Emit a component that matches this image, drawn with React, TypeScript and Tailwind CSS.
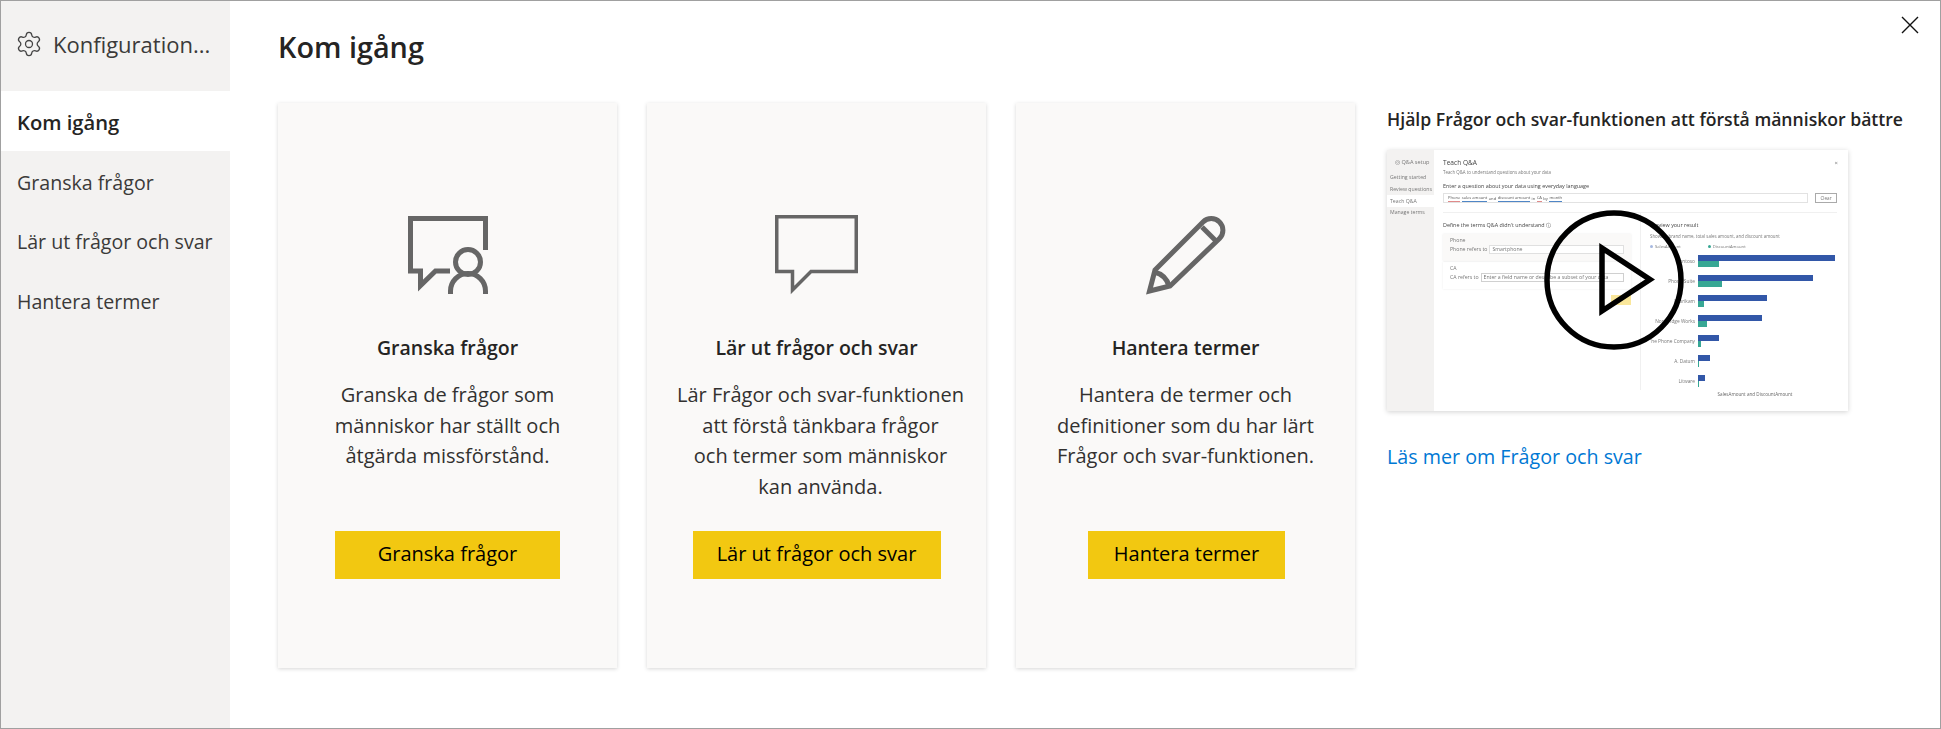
import React from "react";
import { Settings } from "lucide-react";

const font = "[font-family:'Open_Sans','Noto_Sans',sans-serif]";

const ReviewIcon = () => (
  <svg width="80" height="78" viewBox="0 0 80 78" fill="none" stroke="#666" strokeWidth="5">
    <path d="M42 55H27.5L12.5 69.5V55H2.5V2.5H77.5V34" />
    <circle cx="60" cy="46" r="12.5" />
    <path d="M42.5 78v-3a17.5 17.5 0 0 1 35 0v3" />
  </svg>
);

const TeachIcon = () => (
  <svg width="83" height="80" viewBox="0 0 83 80" fill="none" stroke="#666" strokeWidth="3.5">
    <path d="M1.75 1.75H81.25V56.5H36L17.5 75V56.5H1.75Z" />
  </svg>
);

const PencilIcon = () => (
  <svg width="80" height="80" viewBox="0 0 80 80" fill="none" stroke="#666" strokeWidth="5">
    <path d="M9 55L57 7a11.5 11.5 0 0 1 16.5 16.5L24 71L3.5 76Z" />
    <path d="M56 12L70 26" />
    <path d="M8.5 57Q20 60 23 71" />
  </svg>
);

type CardProps = {
  icon: React.ReactNode;
  title: string;
  lines: string[];
  button: string;
  buttonWidth: string;
  bodyOffset?: string;
};

const Card = ({ icon, title, lines, button, buttonWidth, bodyOffset = "" }: CardProps) => (
  <div className="flex h-[565px] w-[339px] flex-col items-center bg-[#faf9f8] pt-[112px] shadow-[0_1px_4px_rgba(0,0,0,0.16)]">
    <div className="flex h-[80px] items-center justify-center">{icon}</div>
    <h2 className="mt-[40px] text-[19.5px] leading-[26px] font-semibold text-[#252423]">{title}</h2>
    <div className={`mt-[19px] h-[151px] text-center text-[20px] leading-[30.5px] text-[#323130] ${bodyOffset}`}>
      {lines.map((line) => (
        <p key={line}>{line}</p>
      ))}
    </div>
    <button className={`h-[48px] bg-[#f2c811] pb-[3px] text-[20px] font-medium text-black ${buttonWidth}`}>{button}</button>
  </div>
);

const bars = [
  ["Contoso", 137, 21],
  ["Phone Suite", 115, 24],
  ["Fabrikam", 69, 6],
  ["Northridge Works", 64, 9],
  ["The Phone Company", 21, 3],
  ["A. Datum", 12, 1],
  ["Litware", 7, 1],
] as const;

const VideoChart = () => (
  <svg width="194" height="150" viewBox="0 0 194 150" className="mt-[3px]">
    {bars.map(([label, blue, green], i) => (
      <g key={label}>
        <rect x="48" y={i * 20 + 2} width={blue} height="6" fill="#3257a8" />
        <rect x="48" y={i * 20 + 8} width={green} height="6" fill="#37a794" />
        <text x="45" y={i * 20 + 10} textAnchor="end" fontSize="4.8" fill="#777">
          {label}
        </text>
      </g>
    ))}
    <text x="105" y="143" textAnchor="middle" fontSize="4.6" fill="#666">
      SalesAmount and DiscountAmount
    </text>
  </svg>
);

const VideoThumb = () => (
  <div className="relative mt-[18px] h-[261px] w-[461px] overflow-hidden bg-white shadow-[0_1px_5px_rgba(0,0,0,0.18)]">
    <div className="flex h-full text-[5.2px] leading-[7px] text-[#777] blur-[0.5px]">
      <div className="w-[47px] shrink-0 bg-[#f3f2f1] pt-[9px]">
        <p className="pl-[8px] text-[5.6px]">◎ Q&A setup</p>
        <p className="mt-[8px] pl-[3px]">Getting started</p>
        <p className="mt-[5px] pl-[3px]">Review questions</p>
        <p className="mt-[2px] bg-white py-[2px] pl-[3px] leading-[8px]">Teach Q&A</p>
        <p className="mt-[2px] pl-[3px]">Manage terms</p>
      </div>
      <div className="min-w-0 flex-1 pt-[9px] pr-[11px] pl-[9px]">
        <div className="flex items-start justify-between">
          <p className="text-[6.6px] leading-[8px] text-[#444]">Teach Q&A</p>
          <span className="mr-[-1px] text-[6px] leading-[8px]">×</span>
        </div>
        <p className="mt-[2px] text-[4.4px]">Teach Q&A to understand questions about your data</p>
        <p className="mt-[7px] text-[5.4px] text-[#444]">Enter a question about your data using everyday language</p>
        <div className="mt-[3px] flex h-[10px] gap-[7px]">
          <div className="flex flex-1 items-center gap-[1.5px] border border-[#e2e2e2] pl-[4px] text-[4.1px] text-[#555]">
            <span className="border-b border-[#e08a8a]">Phone</span>
            <span className="border-b border-[#4f86c6]">sales amount</span>
            <span>and</span>
            <span className="border-b border-[#4f86c6]">discount amount</span>
            <span>in</span>
            <span className="border-b border-[#e08a8a]">CA</span>
            <span>by</span>
            <span className="border-b border-[#4f86c6]">month</span>
          </div>
          <div className="flex w-[22px] items-center justify-center border border-[#aaa] text-[4.6px]">Clear</div>
        </div>
        <div className="mt-[9px] h-px bg-[#f0f0f0]" />
        <div className="flex">
          <div className="w-[188px] shrink-0 pt-[9px]">
            <p className="text-[5.4px] text-[#444]">Define the terms Q&A didn't understand ⓘ</p>
            <div className="mt-[5px] h-[27px] bg-[#faf9f8] px-[7px] pt-[3px] shadow-[0_0_2px_rgba(0,0,0,0.08)]">
              <p>Phone</p>
              <div className="mt-[1px] flex items-center gap-[2px]">
                Phone refers to
                <span className="flex h-[9px] flex-1 items-center border border-[#e0e0e0] bg-white pl-[2px]">Smartphone</span>
              </div>
            </div>
            <div className="mt-[1px] h-[27px] px-[7px] pt-[3px] shadow-[0_0_2px_rgba(0,0,0,0.08)]">
              <p>CA</p>
              <div className="mt-[1px] flex items-center gap-[2px]">
                CA refers to
                <span className="flex h-[9px] flex-1 items-center border border-[#d0d0d0] pl-[2px]">Enter a field name or describe a subset of your data</span>
              </div>
            </div>
            <div className="mt-[6px] ml-auto h-[10px] w-[20px] bg-[#fae79b]" />
          </div>
          <div className="ml-[9px] h-[177px] flex-1 border-l border-[#f0f0f0] pt-[9px] pl-[9px]">
            <p className="text-[5.4px] text-[#444]">Preview your result</p>
            <p className="mt-[4px] text-[4.4px]">Showing brand name, total sales amount, and discount amount</p>
            <div className="mt-[3px] flex items-center gap-[2px] text-[4.2px]">
              <span className="h-[3px] w-[3px] rounded-full bg-[#a6b8e0]" />
              <span className="mr-[25px]">SalesAmount</span>
              <span className="h-[3px] w-[3px] rounded-full bg-[#37a794]" />
              <span>DiscountAmount</span>
            </div>
            <VideoChart />
          </div>
        </div>
      </div>
    </div>
    <svg width="150" height="150" viewBox="0 0 150 150" className="absolute top-[55px] left-[152px] blur-[0.3px]">
      <circle cx="75" cy="75" r="67" fill="none" stroke="#000" strokeWidth="5.5" />
      <path d="M63 43V106L111 74.5Z" fill="none" stroke="#000" strokeWidth="5.5" />
    </svg>
  </div>
);

export default function App() {
  return (
    <div className={`flex h-[729px] w-[1941px] border border-[#a0a0a0] bg-white ${font}`}>
      <aside className="h-full w-[229px] shrink-0 bg-[#f3f2f1] text-[19.6px] text-[#3b3a39]">
        <div className="flex h-[90px] items-start gap-[10px] pt-[29px] pl-[14px] text-[#3b3a39]">
          <Settings size={28} strokeWidth={1.1} color="#444" />
          <span className="text-[22px] leading-[28px]">Konfiguration...</span>
        </div>
        <div className="flex h-[60px] items-center bg-white pt-[2px] pl-[16px] text-[20.2px] font-semibold text-[#252423]">Kom igång</div>
        <div className="flex h-[60px] items-center pt-[3px] pl-[16px]">Granska frågor</div>
        <div className="flex h-[60px] items-center pt-[2px] pl-[16px]">Lär ut frågor och svar</div>
        <div className="flex h-[60px] items-center pt-[2px] pl-[16px]">Hantera termer</div>
      </aside>
      <main className="relative min-w-0 flex-1 pl-[48px]">
        <button className="absolute top-[15px] right-[21px]">
          <svg width="18" height="18" viewBox="0 0 18 18" stroke="#111" strokeWidth="1.4">
            <path d="M1 1L17 17M17 1L1 17" />
          </svg>
        </button>
        <h1 className="flex h-[102px] items-start pt-[27px] text-[28.8px] leading-[38px] font-semibold text-[#252423]">Kom igång</h1>
        <div className="flex gap-[30px]">
          <Card
            icon={<ReviewIcon />}
            title="Granska frågor"
            lines={["Granska de frågor som", "människor har ställt och", "åtgärda missförstånd."]}
            button="Granska frågor"
            buttonWidth="w-[225px]"
          />
          <Card
            icon={<TeachIcon />}
            title="Lär ut frågor och svar"
            lines={["Lär Frågor och svar-funktionen", "att förstå tänkbara frågor", "och termer som människor", "kan använda."]}
            button="Lär ut frågor och svar"
            buttonWidth="w-[248px]"
            bodyOffset="ml-[8px]"
          />
          <Card
            icon={<PencilIcon />}
            title="Hantera termer"
            lines={["Hantera de termer och", "definitioner som du har lärt", "Frågor och svar-funktionen."]}
            button="Hantera termer"
            buttonWidth="ml-[2px] w-[197px]"
          />
          <div className="ml-[2px] w-[518px] shrink-0">
            <h2 className="pt-[3px] text-[17.6px] leading-[26px] font-semibold whitespace-nowrap text-[#252423]">
              Hjälp Frågor och svar-funktionen att förstå människor bättre
            </h2>
            <VideoThumb />
            <a className="mt-[32px] block text-[19.7px] leading-[28px] text-[#0078d4]">Läs mer om Frågor och svar</a>
          </div>
        </div>
      </main>
    </div>
  );
}
